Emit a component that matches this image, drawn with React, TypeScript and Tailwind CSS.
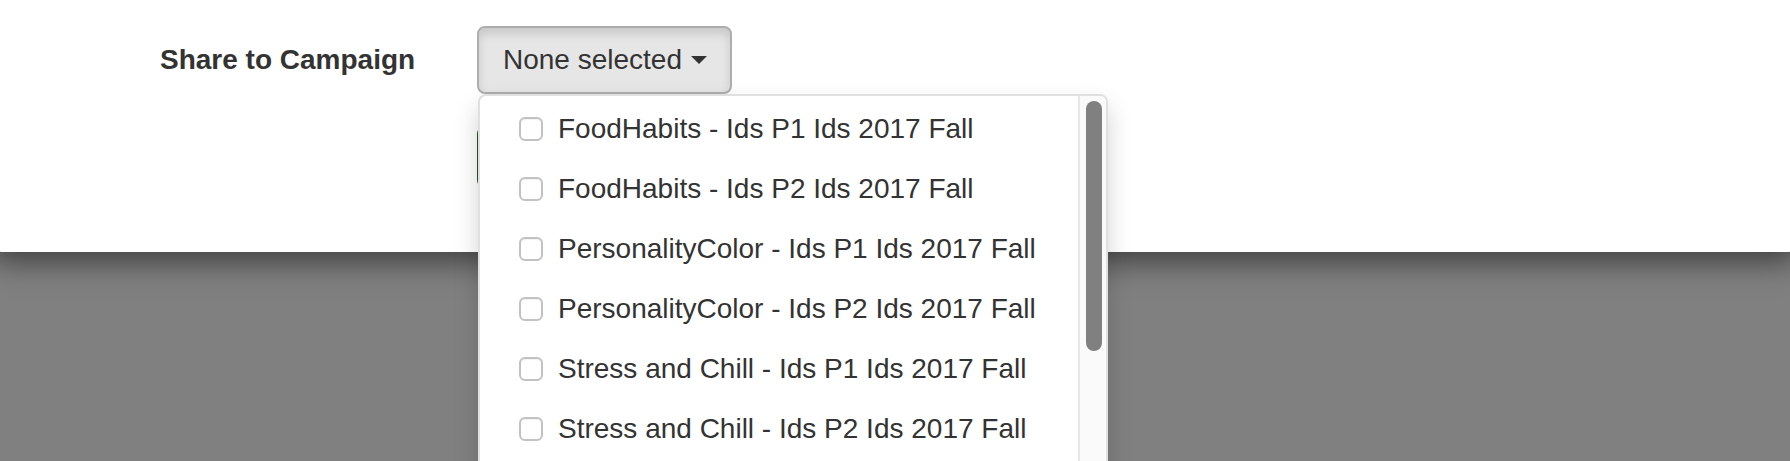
import React from 'react';

const campaigns = [
  'FoodHabits - Ids P1 Ids 2017 Fall',
  'FoodHabits - Ids P2 Ids 2017 Fall',
  'PersonalityColor - Ids P1 Ids 2017 Fall',
  'PersonalityColor - Ids P2 Ids 2017 Fall',
  'Stress and Chill - Ids P1 Ids 2017 Fall',
  'Stress and Chill - Ids P2 Ids 2017 Fall',
];

function Caret() {
  return <span className="ml-[9px] inline-block h-0 w-0 border-x-[8px] border-t-[8px] border-x-transparent border-t-[#333]" />;
}

export default function App() {
  return (
    <div className="h-[461px] overflow-hidden bg-[#808080] font-['Liberation_Sans',Arial,sans-serif] text-[28px] leading-[40px] text-[#333]">
      <div className="-mx-[9px] h-[252px] rounded-b-[12px] bg-white shadow-[0_10px_30px_rgba(0,0,0,0.5)]">
        <div className="flex items-start pl-[169px] pt-[26px]">
          <label className="mt-[14px] w-[256px] font-bold whitespace-nowrap">Share to Campaign</label>
          <div className="relative ml-[61px]">
            <button className="flex items-center rounded-[8px] border-2 border-[#adadad] bg-[#e6e6e6] py-[12px] pr-[23px] pl-[24px] text-[#333] shadow-[inset_0_6px_10px_rgba(0,0,0,0.125)]">
              None selected
              <Caret />
            </button>

            {/* next form row, mostly hidden behind the open menu */}
            <div className="mt-[32px] h-[62px] w-[220px] rounded-[8px] border-2 border-[#255625] bg-[#2e7a2e]" />

            <div className="absolute top-[68px] left-[1px] z-10 flex h-[520px] w-[630px] overflow-hidden rounded-[8px] border-2 border-[rgba(0,0,0,0.12)] bg-white shadow-[0_12px_24px_rgba(0,0,0,0.175)]">
              <ul className="flex-1 pt-[3px]">
                {campaigns.map((c) => (
                  <li key={c} className="flex h-[60px] items-center pl-[39px] whitespace-nowrap">
                    <span className="h-[24px] w-[24px] shrink-0 rounded-[6px] border-2 border-[#c2c2c2] bg-white shadow-[inset_0_1px_1px_rgba(0,0,0,0.05)]" />
                    <span className="ml-[15px]">{c}</span>
                  </li>
                ))}
              </ul>
              <div className="w-[28px] shrink-0 border-l-2 border-[#e6e6e6] bg-[#fafafa] pt-[5px] pl-[6px]">
                <div className="h-[250px] w-[16px] rounded-full bg-[#808080]" />
              </div>
            </div>
          </div>
        </div>
      </div>
    </div>
  );
}
